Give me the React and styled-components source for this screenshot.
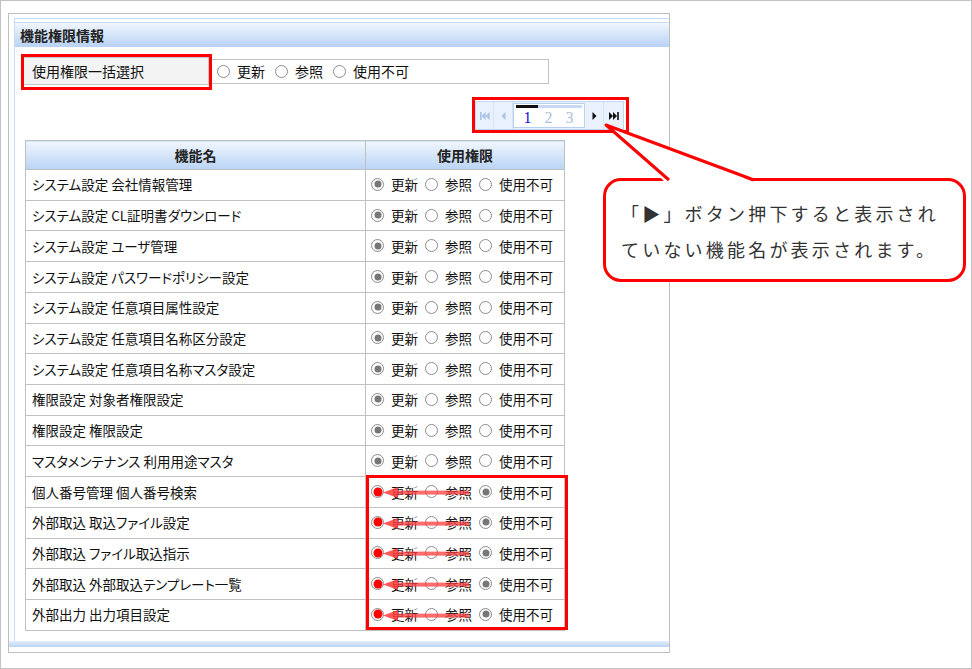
import styled, { createGlobalStyle } from 'styled-components';

const GlobalStyle = createGlobalStyle`
  html, body {
    margin: 0;
    padding: 0;
    background: #fff;
  }
  body {
    font-family: "Noto Sans CJK JP", "Noto Sans", sans-serif;
    color: #111;
  }
  * {
    box-sizing: border-box;
  }
`;

const functions = [
  { name: 'システム設定 会社情報管理' },
  { name: 'システム設定 CL証明書ダウンロード' },
  { name: 'システム設定 ユーザ管理' },
  { name: 'システム設定 パスワードポリシー設定' },
  { name: 'システム設定 任意項目属性設定' },
  { name: 'システム設定 任意項目名称区分設定' },
  { name: 'システム設定 任意項目名称マスタ設定' },
  { name: '権限設定 対象者権限設定' },
  { name: '権限設定 権限設定' },
  { name: 'マスタメンテナンス 利用用途マスタ' },
  { name: '個人番号管理 個人番号検索', marked: true },
  { name: '外部取込 取込ファイル設定', marked: true },
  { name: '外部取込 ファイル取込指示', marked: true },
  { name: '外部取込 外部取込テンプレート一覧', marked: true },
  { name: '外部出力 出力項目設定', marked: true },
];

const options = ['更新', '参照', '使用不可'];

// small arrow drawn over the radios of the marked rows
const LeftArrow = () => (
  <ArrowSvg viewBox="0 0 86 12" width="86" height="12">
    <polygon points="0,6 15,0.5 15,11.5" fill="#ff3b3b" fillOpacity="0.85" />
    <rect x="14" y="4" width="72" height="4" fill="#ff3b3b" fillOpacity="0.75" />
  </ArrowSvg>
);

const PagerIcon = ({ kind, active }) => {
  const c = active ? '#111' : '#a9c3e8';
  if (kind === 'first')
    return (
      <svg width="10" height="8" viewBox="0 0 10 8">
        <rect x="0" y="0" width="1.6" height="8" fill={c} />
        <polygon points="1.6,4 5.6,0 5.6,8" fill={c} />
        <polygon points="5.6,4 9.6,0 9.6,8" fill={c} />
      </svg>
    );
  if (kind === 'prev')
    return (
      <svg width="5" height="8" viewBox="0 0 5 8">
        <polygon points="0.5,4 4.5,0 4.5,8" fill={c} />
      </svg>
    );
  if (kind === 'next')
    return (
      <svg width="5" height="8" viewBox="0 0 5 8">
        <polygon points="4.5,4 0.5,0 0.5,8" fill={c} />
      </svg>
    );
  return (
    <svg width="10" height="8" viewBox="0 0 10 8">
      <polygon points="4,4 0,0 0,8" fill={c} />
      <polygon points="8,4 4,0 4,8" fill={c} />
      <rect x="8.2" y="0" width="1.6" height="8" fill={c} />
    </svg>
  );
};

const App = () => {
  return (
    <Frame>
      <GlobalStyle />
      <Panel>
        <Inner>
          <PanelHeader>機能権限情報</PanelHeader>
          <PanelBody>
            <BulkRow>
              <BulkLabel>使用権限一括選択</BulkLabel>
              <BulkChoices>
                {options.map(opt => (
                  <Choice key={opt} $gap={7} $after={10}>
                    <Radio $size={13} />
                    <span>{opt}</span>
                  </Choice>
                ))}
              </BulkChoices>
            </BulkRow>

            <Pager>
              <PagerButton $w={18}><PagerIcon kind="first" /></PagerButton>
              <PagerButton $w={19}><PagerIcon kind="prev" /></PagerButton>
              <PageNumbers>
                <PageBar><PageBarActive /></PageBar>
                <PageDigits>
                  <PageDigit $current>1</PageDigit>
                  <PageDigit>2</PageDigit>
                  <PageDigit>3</PageDigit>
                </PageDigits>
              </PageNumbers>
              <PagerButton $w={18}><PagerIcon kind="next" active /></PagerButton>
              <PagerButton $w={19} $last><PagerIcon kind="last" active /></PagerButton>
            </Pager>

            <Table>
              <thead>
                <tr>
                  <Th style={{ width: 340 }}>機能名</Th>
                  <Th>使用権限</Th>
                </tr>
              </thead>
              <tbody>
                {functions.map(fn => (
                  <tr key={fn.name}>
                    <NameCell>{fn.name}</NameCell>
                    <ChoiceCell>
                      <ChoiceRow>
                        {options.map((opt, i) => (
                          <Choice key={opt} $gap={7} $after={7}>
                            <Radio
                              $size={13}
                              $checked={fn.marked ? i === 2 : i === 0}
                              $red={fn.marked && i === 0}
                            />
                            <span>{opt}</span>
                          </Choice>
                        ))}
                      </ChoiceRow>
                      {fn.marked && <LeftArrow />}
                    </ChoiceCell>
                  </tr>
                ))}
              </tbody>
            </Table>
          </PanelBody>
        </Inner>
        <PanelFooter />
      </Panel>

      <Highlight $x={20} $y={53} $w={191} $h={36} />
      <Highlight $x={471} $y={96} $w={157} $h={36} />
      <Highlight $x={365} $y={474} $w={202} $h={155} />

      <Callout>
        「▶」ボタン押下すると表示され
        <br />
        ていない機能名が表示されます。
      </Callout>
      <CalloutTail viewBox="0 0 165 66" width="165" height="66">
        <polygon points="7,6 67,64 158,64" fill="#fff" />
        <polyline
          points="70,61 7,6 155,61"
          fill="none"
          stroke="#f00"
          strokeWidth="3"
          strokeLinejoin="round"
        />
      </CalloutTail>
    </Frame>
  );
};

export default App;

const Frame = styled.div`
  position: relative;
  width: 972px;
  height: 669px;
  border: 1px solid #c2c2c2;
  padding: 12px 0 0 7px;
  background: #fff;
  overflow: hidden;
`;

const Panel = styled.div`
  width: 662px;
  height: 640px;
  border: 1px solid #bfbfbf;
  display: flex;
  flex-direction: column;
  padding-bottom: 5px;
`;

const Inner = styled.div`
  flex: 1;
  margin: 4px 0 0 5px;
  border-top: 1px solid #c6dcf6;
  border-left: 1px solid #c6dcf6;
  padding-top: 3px;
  display: flex;
  flex-direction: column;
`;

const PanelHeader = styled.div`
  height: 25px;
  border-top: 1px solid #c6dcf6;
  background: linear-gradient(#f1f6fe, #b8d2f4);
  display: flex;
  align-items: center;
  padding-left: 5px;
  font-size: 14px;
  font-weight: bold;
  color: #222;
`;

const PanelBody = styled.div`
  display: flex;
  flex-direction: column;
  align-items: flex-start;
  padding: 10px 0 0 7px;
`;

const PanelFooter = styled.div`
  height: 6px;
  background: linear-gradient(#e3edfb, #bcd4f3);
`;

const BulkRow = styled.div`
  display: flex;
  align-items: center;
`;

const BulkLabel = styled.div`
  width: 187px;
  height: 28px;
  background: #f3f3f3;
  border: 1px solid #c8c8c8;
  display: flex;
  align-items: center;
  padding-left: 9px;
  font-size: 14px;
  color: #111;
`;

const BulkChoices = styled.div`
  width: 340px;
  height: 25px;
  border: 1px solid #c0c0c0;
  border-left: none;
  display: flex;
  align-items: center;
  padding-left: 8px;
  font-size: 14px;
`;

const Choice = styled.label`
  display: flex;
  align-items: center;
  gap: ${p => p.$gap}px;
  margin-right: ${p => p.$after}px;
  white-space: nowrap;
`;

const Radio = styled.span`
  position: relative;
  flex: none;
  width: ${p => p.$size}px;
  height: ${p => p.$size}px;
  border-radius: 50%;
  border: 1px solid #8c8c8c;
  background: #fff;

  &::after {
    content: '';
    display: ${p => (p.$checked || p.$red ? 'block' : 'none')};
    position: absolute;
    left: 50%;
    top: 50%;
    width: ${p => (p.$red ? 9 : 7)}px;
    height: ${p => (p.$red ? 9 : 7)}px;
    transform: translate(-50%, -50%);
    border-radius: 50%;
    background: ${p => (p.$red ? '#ff0000' : '#777')};
  }
`;

const Pager = styled.div`
  display: flex;
  height: 29px;
  margin: 16px 0 0 453px;
  border: 1px solid #c3d7f0;
  background: #e9f1fc;
`;

const PagerButton = styled.div`
  width: ${p => p.$w}px;
  display: flex;
  align-items: center;
  justify-content: center;
  border-right: ${p => (p.$last ? 'none' : '1px solid #d4e3f6')};
`;

const PageNumbers = styled.div`
  width: 72px;
  margin: 1px 0;
  background: #fff;
  border: 1px solid #b9d0ef;
  display: flex;
  flex-direction: column;
  padding: 1px 2px 0;
  margin-right: 1px;
`;

const PageBar = styled.div`
  height: 3px;
  background: #c6d9f2;
`;

const PageBarActive = styled.div`
  width: 22px;
  height: 3px;
  background: #111;
`;

const PageDigits = styled.div`
  display: flex;
  flex: 1;
  align-items: center;
  padding-left: 1px;
`;

const PageDigit = styled.span`
  width: 21px;
  text-align: center;
  font-family: "Liberation Serif", serif;
  font-size: 16px;
  line-height: 1;
  color: ${p => (p.$current ? '#1515e0' : '#aebfdc')};
`;

const Table = styled.table`
  margin: 10px 0 0 3px;
  width: 540px;
  border-collapse: collapse;
  font-size: 13.5px;
`;

const Th = styled.th`
  height: 29px;
  padding: 0;
  border: 1px solid #c0c0c0;
  background: linear-gradient(#f0f6fe, #bad4f5);
  font-size: 14px;
  font-weight: bold;
  color: #222;
  text-align: center;
`;

const NameCell = styled.td`
  height: 30.73px;
  padding: 0 0 1px 6px;
  border: 1px solid #c0c0c0;
  font-feature-settings: "palt";
  white-space: nowrap;
  color: #111;
`;

const ChoiceCell = styled.td`
  position: relative;
  padding: 0 0 1px 5px;
  border: 1px solid #c0c0c0;
`;

const ChoiceRow = styled.div`
  display: flex;
  align-items: center;
`;

const ArrowSvg = styled.svg`
  position: absolute;
  left: 17px;
  top: 50%;
  transform: translateY(-45%);
  pointer-events: none;
`;

const Highlight = styled.div`
  position: absolute;
  left: ${p => p.$x}px;
  top: ${p => p.$y}px;
  width: ${p => p.$w}px;
  height: ${p => p.$h}px;
  border: 3px solid #ff0000;
  pointer-events: none;
`;

const Callout = styled.div`
  position: absolute;
  left: 602px;
  top: 177px;
  width: 363px;
  height: 104px;
  border: 3px solid #ff0000;
  border-radius: 18px;
  background: #fff;
  padding: 14px 0 0 15px;
  font-size: 18px;
  font-weight: 400;
  line-height: 36px;
  letter-spacing: 3.2px;
  color: #333;
  white-space: nowrap;
`;

const CalloutTail = styled.svg`
  position: absolute;
  left: 598px;
  top: 118px;
  overflow: visible;
`;
